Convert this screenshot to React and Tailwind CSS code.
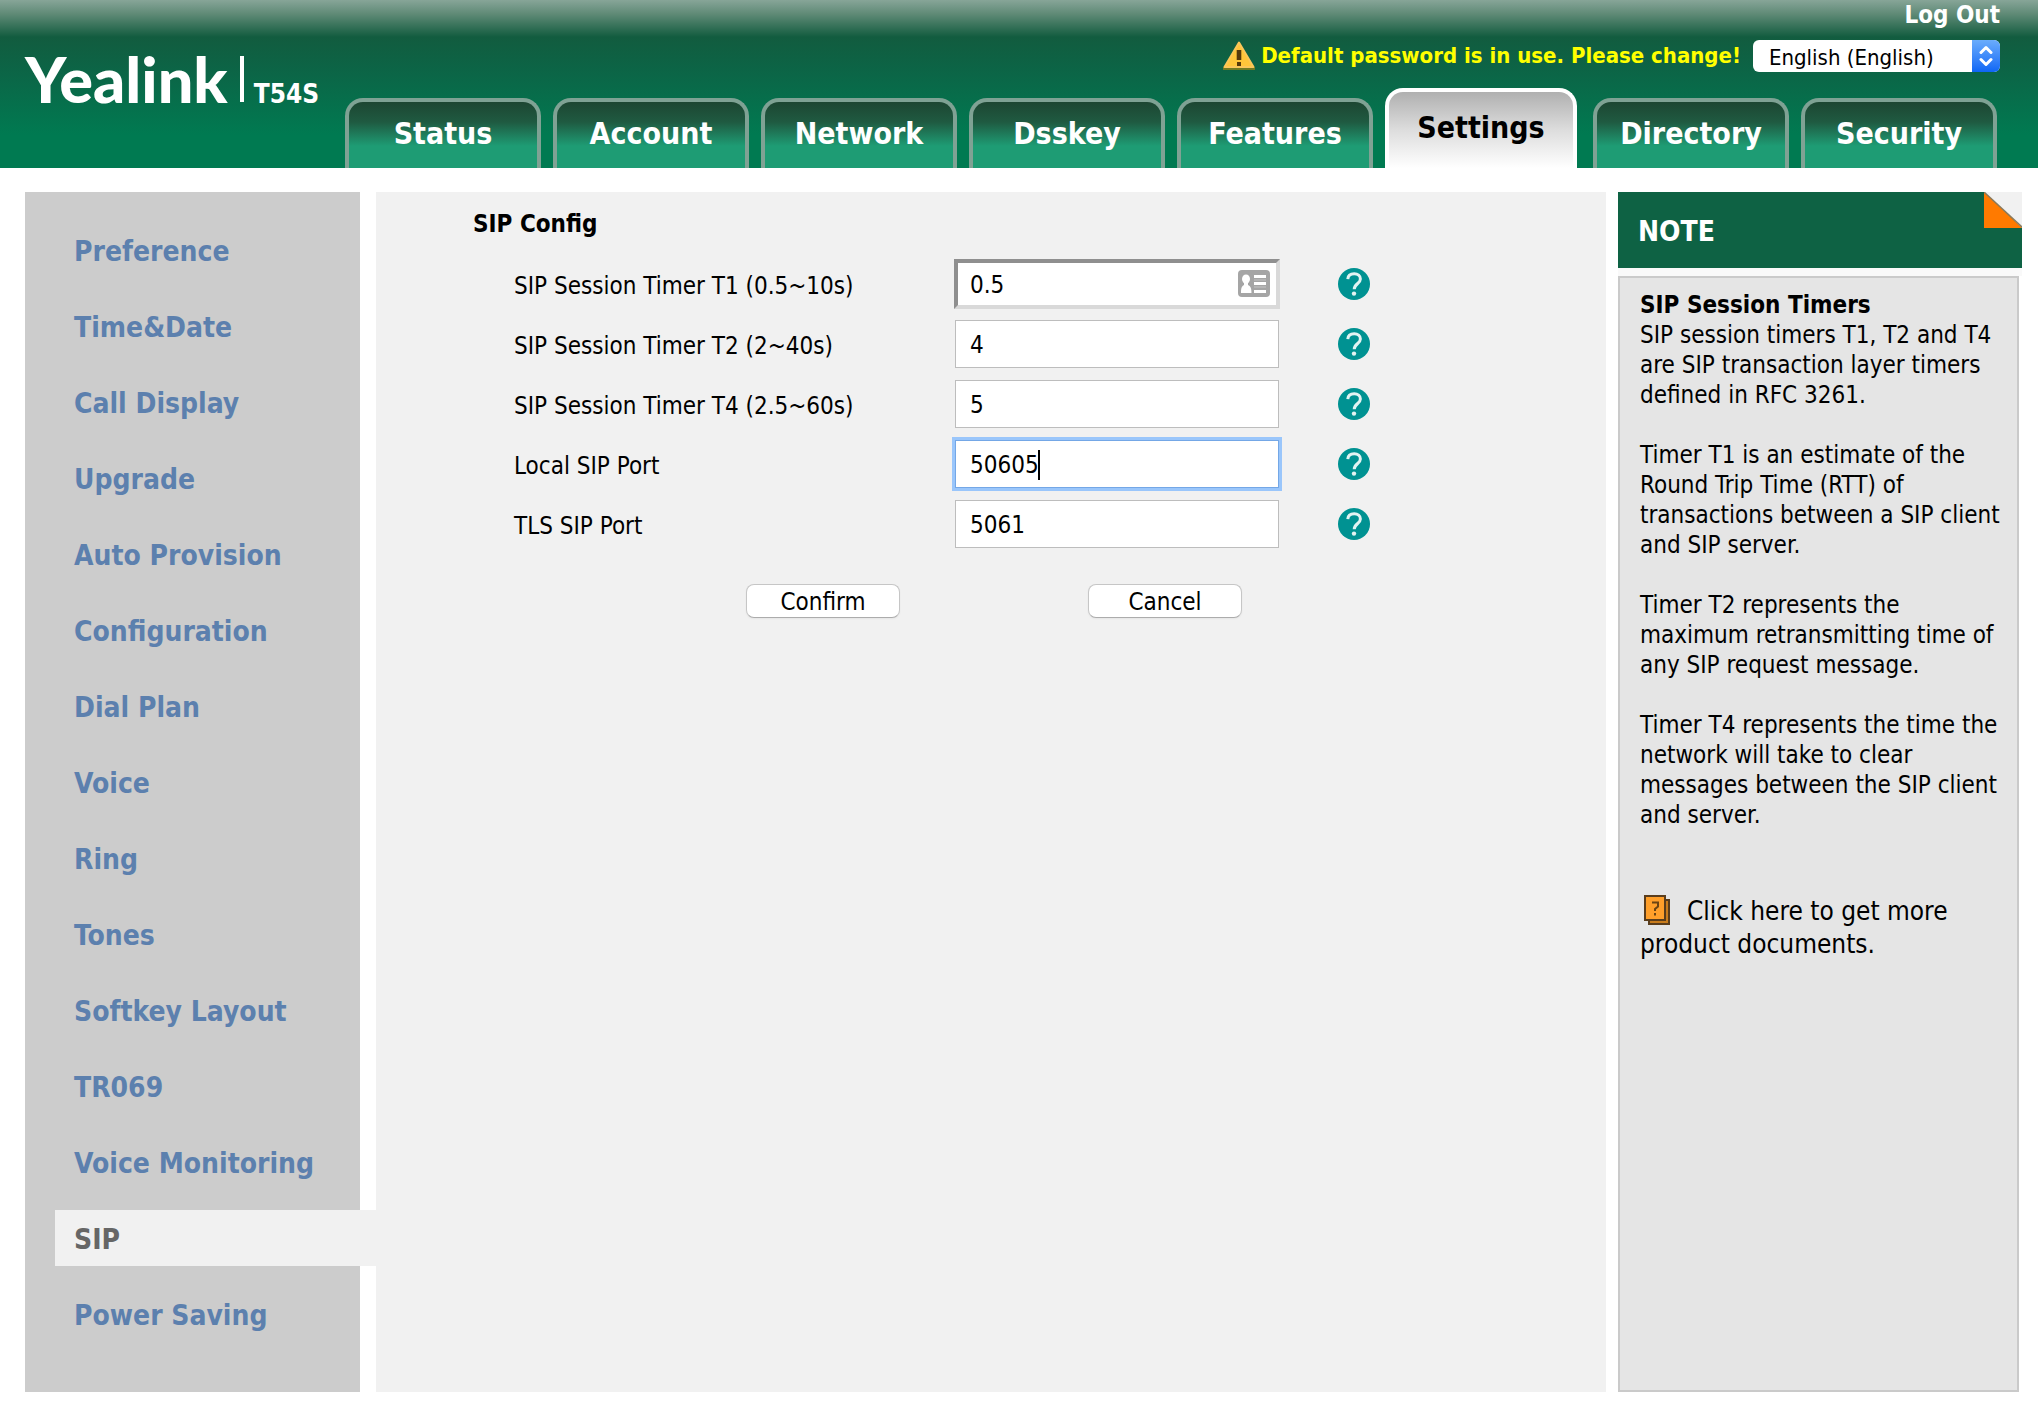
import { useState } from "react";

const TABS = ["Status", "Account", "Network", "Dsskey", "Features", "Settings", "Directory", "Security"];

const MENU = [
  "Preference",
  "Time&Date",
  "Call Display",
  "Upgrade",
  "Auto Provision",
  "Configuration",
  "Dial Plan",
  "Voice",
  "Ring",
  "Tones",
  "Softkey Layout",
  "TR069",
  "Voice Monitoring",
  "SIP",
  "Power Saving",
];

const FIELDS = [
  { id: "t1", label: "SIP Session Timer T1 (0.5~10s)", value: "0.5" },
  { id: "t2", label: "SIP Session Timer T2 (2~40s)", value: "4" },
  { id: "t4", label: "SIP Session Timer T4 (2.5~60s)", value: "5" },
  { id: "localPort", label: "Local SIP Port", value: "50605" },
  { id: "tlsPort", label: "TLS SIP Port", value: "5061" },
];

const NOTES = [
  "SIP session timers T1, T2 and T4\nare SIP transaction layer timers\ndefined in RFC 3261.",
  "Timer T1 is an estimate of the\nRound Trip Time (RTT) of\ntransactions between a SIP client\nand SIP server.",
  "Timer T2 represents the\nmaximum retransmitting time of\nany SIP request message.",
  "Timer T4 represents the time the\nnetwork will take to clear\nmessages between the SIP client\nand server.",
];

const WarningIcon = () => (
  <svg viewBox="0 0 32 30" className="h-[30px] w-8 shrink-0" aria-hidden="true">
    <path d="M0 26h32v3H0z" fill="#6f7a22" />
    <path d="M16 1.500 30.500 26h-29z" fill="#ffc53a" stroke="#fbc65a" strokeWidth="2" strokeLinejoin="round" />
    <path d="M13.700 9h4.600v10h-4.600z" fill="#55390c" />
    <path d="M14 21h4v4h-4z" fill="#55390c" />
  </svg>
);

const HelpIcon = () => (
  <svg viewBox="0 0 32 32" className="size-8" aria-hidden="true">
    <circle cx="16" cy="16" r="16" fill="#009292" />
    <path
      d="M9.800 11.200C10 7.600 12.600 5.800 16.200 5.800c3.600 0 6.200 1.900 6.200 5.200 0 4.600-6.200 5-6.200 10.200"
      fill="none"
      stroke="#e2f3f2"
      strokeWidth="3"
    />
    <circle cx="16" cy="25.600" r="2.200" fill="#e2f3f2" />
  </svg>
);

const ContactIcon = () => (
  <svg viewBox="0 0 32 27" className="pointer-events-none absolute top-[11px] right-2.5 h-[27px] w-8" aria-hidden="true">
    <rect width="32" height="27" rx="4" fill="#a5a5a5" />
    <ellipse cx="8" cy="9" rx="4" ry="4.500" fill="#fff" />
    <path d="M6 12h4v3c2.500 1 3.500 3 3.500 8H3c0-5 .8-7 3-8z" fill="#fff" />
    <path d="M16 5h12v3H16zM16 12h12v3H16zM16 20h12v3H16z" fill="#fff" />
    <path d="M16 10h12M16 17h12" stroke="#c4c4c4" />
  </svg>
);

const DocsIcon = () => (
  <svg viewBox="0 0 28 30" className="mr-[15px] ml-1 inline-block h-[30px] w-7 align-[-5px]" aria-hidden="true">
    <rect x="5" y="5" width="20" height="24" fill="#c97c1c" stroke="#5a3d1c" strokeWidth="2" />
    <rect x="1" y="1" width="20" height="24" fill="#ff9f2a" stroke="#5a3d1c" strokeWidth="2" />
    <path d="M8 7.500h6v4l-3 2.500v2M11 18v2.500" fill="none" stroke="#6b4413" strokeWidth="2" />
  </svg>
);

const Header = ({ tab, setTab }) => (
  <header className="flex h-[168px] justify-between bg-[linear-gradient(#87a598_0px,#5f8a76_14px,#125c3f_37px,#0b6647_75px,#007a51_135px,#007a51_168px)] text-white">
    <div className="flex items-start pt-14 pl-[25px]">
      <span className="font-['Lato'] text-[63px] leading-[46px] font-black">Yealink</span>
      <span className="ml-3 h-[46px] w-1 bg-white" />
      <span className="ml-2.5 pt-[22px] text-[26px] leading-[32px] font-bold">T54S</span>
    </div>

    <div className="flex flex-col justify-between pr-[38px]">
      <div className="flex flex-col items-end">
        <a href="#logout" className="text-2xl leading-[30px] font-bold">Log Out</a>
        <div className="mt-[10px] flex items-center gap-3">
          <a href="#password" className="flex items-center gap-[6px] text-[22px] leading-[30px] font-bold text-[#ffff00]">
            <WarningIcon />
            Default password is in use. Please change!
          </a>
          <div className="relative">
            <select
              aria-label="Language"
              className="h-8 w-[247px] appearance-none rounded-md bg-white pt-1 pl-4 text-[22px] leading-7 text-black"
            >
              <option>English (English)</option>
            </select>
            <span className="pointer-events-none absolute top-0 right-0 flex h-8 w-7 items-center justify-center rounded-r-md bg-linear-to-b from-[#6aacfc] to-[#0d66f5]">
              <svg viewBox="0 0 14 22" className="h-[22px] w-3.5" fill="none" stroke="#fff" strokeWidth="3" strokeLinecap="round" strokeLinejoin="round">
                <path d="M2 7.500 7 2.500l5 5M2 14.500l5 5 5-5" />
              </svg>
            </span>
          </div>
        </div>
      </div>

      {/* TABS */}
      <nav className="mr-[3px] flex items-end gap-3">
        {TABS.map((name) =>
          name === tab ? (
            <a
              key={name}
              href={`#${name}`}
              className="mr-1 flex h-20 w-48 justify-center rounded-t-[18px] border-x-4 border-t-4 border-white bg-linear-to-b from-[#b0b0b0] via-[#dddddd] to-white pt-4 text-[30px] leading-[40px] font-bold text-black"
            >
              {name}
            </a>
          ) : (
            <a
              key={name}
              href={`#${name}`}
              onClick={() => setTab(name)}
              className="flex h-[70px] w-[196px] justify-center rounded-t-[18px] border-x-4 border-t-4 border-[#7fa294] bg-[linear-gradient(#1d4632_0px,#1f5a41_20px,#1e9c74_44px)] pt-3 text-[30px] leading-[40px] font-bold"
            >
              {name}
            </a>
          )
        )}
      </nav>
    </div>
  </header>
);

const Sidebar = ({ page, setPage }) => (
  <nav className="mr-4 flex w-[335px] shrink-0 flex-col gap-5 bg-[#cccccc] pt-[30px] pb-[50px] pl-[30px]">
    {MENU.map((item) => (
      <a
        key={item}
        href={`#${item}`}
        onClick={() => setPage(item)}
        className={
          item === page
            ? "-mr-4 bg-[#f1f1f1] pt-1 pl-[19px] text-[28px] leading-[52px] font-bold text-[#666666]"
            : "pt-1 pl-[19px] text-[28px] leading-[52px] font-bold text-[#5c80ae]"
        }
      >
        {item}
      </a>
    ))}
  </nav>
);

const fieldClass = {
  t1: "h-[50px] w-[326px] border-4 border-t-[#8f8f8f] border-r-[#d9d9d9] border-b-[#d9d9d9] border-l-[#8f8f8f] bg-white pt-0.5 pl-3 text-2xl outline-none",
  localPort: "mx-px h-12 w-[324px] border border-[#74a7e6] bg-white pt-0.5 pl-3.5 text-2xl outline-3 outline-[#9ac6fb]",
};

const Field = ({ id, label, value, onChange }) => (
  <>
    <label htmlFor={id} className="pt-[3px] pl-[41px] text-2xl">{label}</label>
    <div className="relative w-[326px]">
      <input
        id={id}
        value={value}
        onChange={(e) => onChange(id, e.target.value)}
        className={fieldClass[id] || "mx-px h-12 w-[324px] border border-[#bdbdbd] bg-white pt-0.5 pl-3.5 text-2xl outline-none"}
      />
      {id === "t1" && <ContactIcon />}
      {id === "localPort" && <span className="absolute top-2.5 left-[84px] h-[30px] w-0.5 bg-black" />}
    </div>
    <button type="button" aria-label={`Help: ${label}`} className="w-8">
      <HelpIcon />
    </button>
  </>
);

const App = () => {
  const [tab, setTab] = useState("Settings");
  const [page, setPage] = useState("SIP");
  const [values, setValues] = useState(Object.fromEntries(FIELDS.map((f) => [f.id, f.value])));

  const update = (id, value) => setValues((prev) => ({ ...prev, [id]: value }));

  return (
    <div className="min-h-screen bg-white font-['DejaVu_Sans_Condensed','Noto_Sans',sans-serif] text-black">
      <Header tab={tab} setTab={setTab} />

      <div className="flex pt-6 pr-4 pb-[18px] pl-[25px]">
        <Sidebar page={page} setPage={setPage} />

        <main className="flex-1 bg-[#f1f1f1] pt-4 pl-[97px]">
          <h1 className="text-2xl leading-8 font-bold">SIP Config</h1>
          <form onSubmit={(e) => e.preventDefault()}>
            <div className="mt-[14px] grid auto-rows-[60px] grid-cols-[481px_384px_32px] items-center">
              {FIELDS.map((f) => (
                <Field key={f.id} id={f.id} label={f.label} value={values[f.id]} onChange={update} />
              ))}
            </div>
            <div className="mt-[30px] flex gap-[188px] pl-[273px]">
              {["Confirm", "Cancel"].map((name) => (
                <button
                  key={name}
                  type="button"
                  className="h-[34px] w-[154px] rounded-lg border border-[#c6c6c6] border-b-[#acacac] bg-white pt-0.5 text-2xl leading-[30px] shadow-xs"
                >
                  {name}
                </button>
              ))}
            </div>
          </form>
        </main>

        {/* NOTE */}
        <aside className="ml-3 flex w-[404px] shrink-0 flex-col">
          <div className="relative flex h-[76px] items-center bg-[#0e6244] pt-1 pl-5">
            <h2 className="text-[28px] font-bold text-white">NOTE</h2>
            <svg viewBox="0 0 38 36" className="absolute top-0 right-0 h-9 w-[38px]" aria-hidden="true">
              <path d="M0 0h38v36z" fill="#f1f1f1" />
              <path d="M0 0l38 36H0z" fill="#ff7a00" />
              <path d="M0 0l38 35" stroke="#8b7a5c" strokeWidth="1.500" />
            </svg>
          </div>
          <div className="h-2 bg-[#f9f9f9]" />
          <div className="mr-[3px] flex-1 border-2 border-[#cacaca] bg-[#e5e5e5] pt-3 pl-5 text-2xl leading-[30px]">
            <h3 className="font-bold">SIP Session Timers</h3>
            <div className="flex flex-col gap-[30px] whitespace-pre">
              {NOTES.map((note) => (
                <p key={note}>{note}</p>
              ))}
            </div>
            <a href="#docs" className="mt-[65px] block text-[26px] leading-[33px]">
              <DocsIcon />
              Click here to get more
              <br />
              product documents.
            </a>
          </div>
        </aside>
      </div>
    </div>
  );
};

export default App;
